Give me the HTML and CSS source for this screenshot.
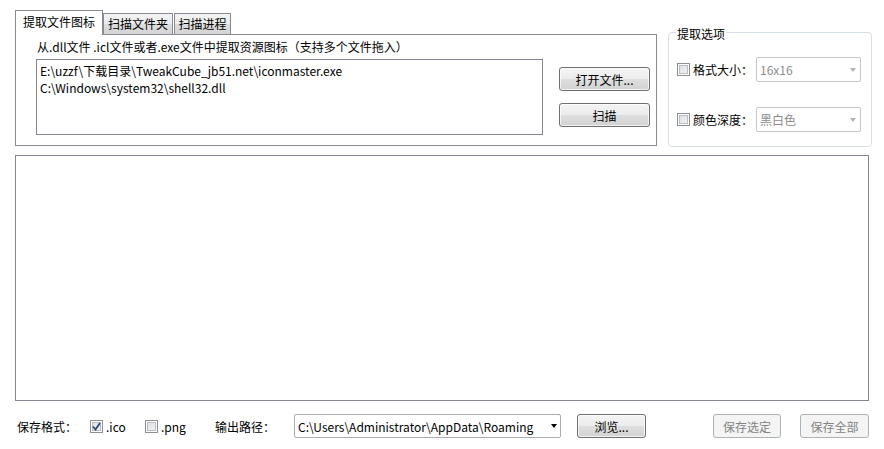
FILE: index.html
```html
<!DOCTYPE html>
<html lang="zh-CN">
<head>
    <meta charset="UTF-8">
    <title>IconMaster</title>
    <link rel="stylesheet" href="styles.css">
</head>
<body>
    <div class="window">
        <div class="top">
            <div class="tabs">
                <div class="tab-strip">
                    <div class="tab active">提取文件图标</div>
                    <div class="tab tab-folder">扫描文件夹</div>
                    <div class="tab tab-process">扫描进程</div>
                </div>
                <div class="tab-panel">
                    <div class="hint">从.dll文件 .icl文件或者.exe文件中提取资源图标（支持多个文件拖入）</div>
                    <div class="panel-row">
                        <div class="file-list">
                            <div>E:\uzzf\下载目录\TweakCube_jb51.net\iconmaster.exe</div>
                            <div>C:\Windows\system32\shell32.dll</div>
                        </div>
                        <div class="panel-buttons">
                            <button class="btn">打开文件...</button>
                            <button class="btn">扫描</button>
                        </div>
                    </div>
                </div>
            </div>

            <div class="group">
                <span class="group-title">提取选项</span>
                <div class="opt-row">
                    <span class="check"></span>
                    <span class="opt-label">格式大小<span class="colon">：</span></span>
                    <div class="select disabled"><span class="select-text">16x16</span><span class="arrow"></span></div>
                </div>
                <div class="opt-row">
                    <span class="check"></span>
                    <span class="opt-label">颜色深度<span class="colon">：</span></span>
                    <div class="select disabled"><span class="select-text">黑白色</span><span class="arrow"></span></div>
                </div>
            </div>
        </div>

        <div class="preview"></div>

        <div class="bottom">
            <span class="fmt-label">保存格式<span class="colon">：</span></span>
            <div class="check-item item-ico">
                <span class="check checked">
                    <svg width="11" height="11" viewBox="0 0 11 11"><path d="M2 5.5 L4.5 8.5 L9 2" fill="none" stroke="#2b4a7a" stroke-width="1.8"/></svg>
                </span>
                <span>.ico</span>
            </div>
            <div class="check-item item-png">
                <span class="check"></span>
                <span>.png</span>
            </div>
            <span class="path-label">输出路径<span class="colon">：</span></span>
            <div class="select path-select"><span class="select-text">C:\Users\Administrator\AppData\Roaming</span><span class="arrow"></span></div>
            <button class="btn btn-browse">浏览...</button>
            <button class="btn btn-save-sel" disabled>保存选定</button>
            <button class="btn btn-save-all" disabled>保存全部</button>
        </div>
    </div>
</body>
</html>
```

FILE: styles.css
```css
* {
    box-sizing: border-box;
}

body {
    margin: 0;
    background-color: #fff;
    font-family: "Noto Sans CJK SC", "Microsoft YaHei", sans-serif;
    font-size: 12px;
    color: #000;
}

.window {
    width: 884px;
    height: 449px;
    padding: 10px 0 0 15px;
}

.top {
    display: flex;
    align-items: flex-start;
}

/* centred full-width colon, like the Windows UI font */
.colon {
    font-family: "Noto Sans CJK TC", sans-serif;
}

/* tab control */
.tabs {
    width: 642px;
}

.tab-strip {
    display: flex;
    align-items: flex-start;
    height: 24px;
}

.tab {
    height: 21px;
    margin-top: 3px;
    line-height: 20px;
    text-align: center;
    border: 1px solid #898c95;
    border-bottom: none;
    background: linear-gradient(#f3f3f3, #ebebeb 50%, #dedede 50%, #d4d4d4);
}

.tab.active {
    position: relative;
    z-index: 1;
    width: 88px;
    height: 25px;
    margin-top: 0;
    line-height: 22px;
    background: #fff;
}

.tab-folder {
    width: 70px;
}

.tab-process {
    width: 57px;
    margin-left: 1px;
}

.tab-panel {
    height: 112px;
    border: 1px solid #898c95;
    padding: 4px 0 0 20px;
}

.hint {
    margin-left: 1px;
    line-height: 16px;
}

.panel-row {
    display: flex;
    margin-top: 4px;
}

.file-list {
    width: 507px;
    height: 76px;
    border: 1px solid #828790;
    padding: 2px 3px;
    line-height: 17px;
}

.panel-buttons {
    display: flex;
    flex-direction: column;
    gap: 12px;
    margin-left: 16px;
    padding-top: 8px;
}

.panel-buttons .btn {
    width: 91px;
    height: 24px;
}

/* buttons */
.btn {
    font-family: inherit;
    font-size: 12px;
    color: #000;
    padding: 0;
    border: 1px solid #707070;
    border-radius: 3px;
    background: linear-gradient(#f4f4f4, #ececec 50%, #dfdfdf 50%, #d2d2d2);
    box-shadow: inset 0 0 0 1px rgba(255, 255, 255, 0.7);
}

.btn:disabled {
    color: #838383;
    border-color: #adb2b5;
    background: #f4f4f4;
    box-shadow: none;
}

/* options group */
.group {
    position: relative;
    width: 204px;
    height: 115px;
    margin: 22px 0 0 11px;
    padding: 24px 0 0 8px;
    border: 1px solid #d5dfe5;
    border-radius: 4px;
}

.group-title {
    position: absolute;
    top: -7px;
    left: 7px;
    padding: 0 1px;
    line-height: 16px;
    background-color: #fff;
}

.opt-row {
    display: flex;
    align-items: center;
    height: 25px;
    margin-bottom: 25px;
}

.opt-row .opt-label {
    width: 63px;
    margin-left: 3px;
}

.opt-row .select {
    width: 105px;
}

/* checkbox */
.check {
    display: inline-flex;
    align-items: center;
    justify-content: center;
    width: 13px;
    height: 13px;
    border: 1px solid #8e8f8f;
    background: linear-gradient(135deg, #d9dce1, #f7f7f7);
    box-shadow: inset 0 0 0 1px #fff, inset 0 0 0 2px #b9bec4;
}

/* combo box */
.select {
    display: flex;
    align-items: center;
    height: 25px;
    border: 1px solid #abadb3;
    border-radius: 2px;
    background-color: #fff;
    padding-left: 3px;
}

.select-text {
    flex: 1;
    overflow: hidden;
    white-space: nowrap;
}

.select.disabled {
    border-color: #c6c6c6;
    color: #8d8d8d;
}

.arrow {
    width: 0;
    height: 0;
    margin: 0 3px 0 5px;
    border-left: 3.5px solid transparent;
    border-right: 3.5px solid transparent;
    border-top: 4px solid #000;
}

.select.disabled .arrow {
    margin: 0 4px 0 8px;
    border-top-color: #b4b4b4;
}

/* list */
.preview {
    width: 854px;
    height: 246px;
    margin-top: 8px;
    border: 1px solid #828790;
}

/* bottom bar */
.bottom {
    display: flex;
    align-items: center;
    height: 24px;
    margin-top: 13px;
}

.fmt-label {
    width: 75px;
    padding-left: 2px;
}

.check-item {
    display: flex;
    align-items: center;
    gap: 3px;
}

.item-ico {
    width: 55px;
}

.item-png {
    width: 70px;
}

.path-label {
    width: 79px;
}

.path-select {
    width: 267px;
    height: 24px;
}

.btn-browse {
    width: 69px;
    height: 24px;
    margin-left: 16px;
}

.btn-save-sel {
    width: 68px;
    height: 24px;
    margin-left: 67px;
}

.btn-save-all {
    width: 69px;
    height: 24px;
    margin-left: 19px;
}
```
